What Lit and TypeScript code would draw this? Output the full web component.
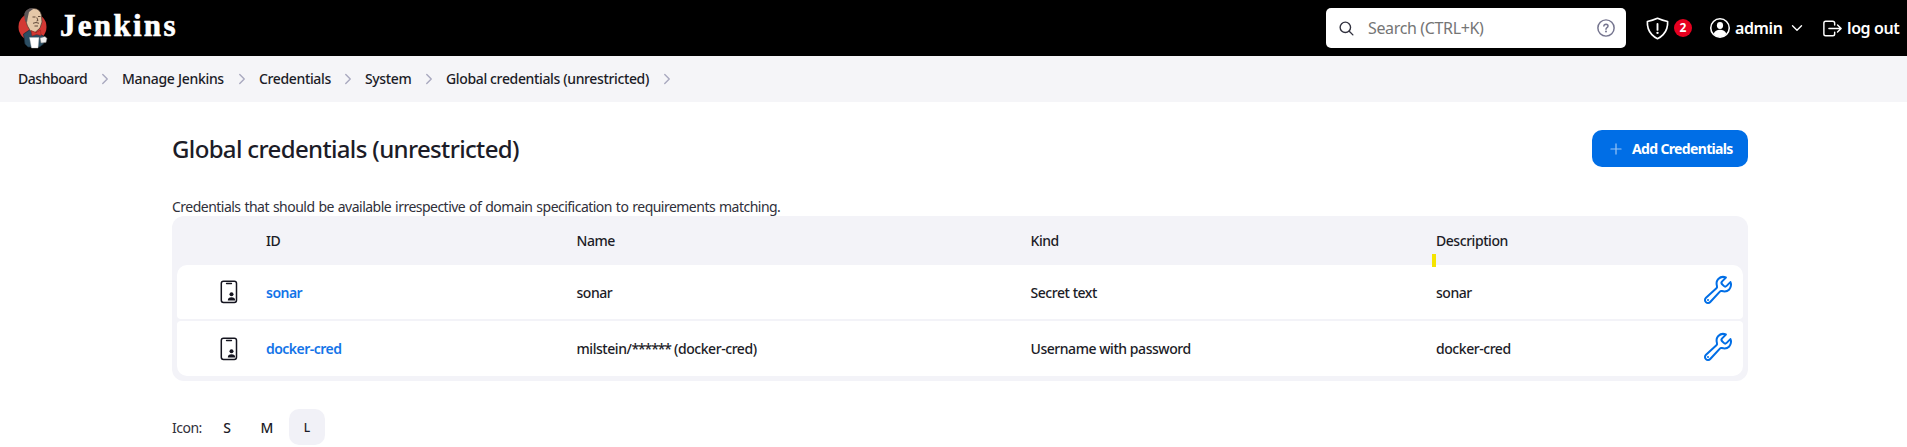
import { LitElement, html, css, svg } from "lit";
import { customElement } from "lit/decorators.js";

interface Credential {
  id: string;
  name: unknown;
  kind: string;
  description: string;
}

const crumbs = [
  { label: "Dashboard", cls: "c1" },
  { label: "Manage Jenkins", cls: "c2" },
  { label: "Credentials", cls: "c3" },
  { label: "System", cls: "c4" },
  { label: "Global credentials (unrestricted)", cls: "c5" },
];

const credentials: Credential[] = [
  { id: "sonar", name: "sonar", kind: "Secret text", description: "sonar" },
  {
    id: "docker-cred",
    name: html`milstein/<span class="mask">******</span> (docker-cred)`,
    kind: "Username with password",
    description: "docker-cred",
  },
];

const butler = html`<svg class="butler" viewBox="0 0 30 42" width="30" height="42">
  <ellipse cx="14.500" cy="20" rx="14" ry="14" fill="#d33833" />
  <path d="M5.500 27l6-4 8 3 6 3 0 8-4 3H10l-3-3z" fill="#2c4e63" stroke="#172a38" stroke-width=".7" />
  <path d="M8 4.500Q6 8 7.500 13l2 6 3 5 4.500 1.500L22 21l2-6-.6-7Q22 1.800 16 1.500 10.500 1 8 4.500z" fill="#e5c8a8" stroke="#4a3a31" stroke-width=".7" />
  <path d="M16 1.300C11 .5 8 2.500 6.300 6.500L7 13.500l2 2 .6-4L11 5z" fill="#5c5557" />
  <path d="M14.500 10h3M20 9.500h2.500M18.800 10.500l1.200 3-1.500.5M15 16.300q3-1.600 6 0M16.500 19h3.500" fill="none" stroke="#513b2e" stroke-width=".9" />
  <path d="M13 23.500l5 2 4.500-2.500.5 5.500-4.500-1-4.500 1.500z" fill="#d33833" stroke="#8d201c" stroke-width=".5" />
  <path d="M11.500 30.500h9.500l-1 10.500h-6.500z" fill="#fff" stroke="#bbb" stroke-width=".4" />
  <path d="M22 31l5-1.500 2 2-1 4-5 .5z" fill="#eee" stroke="#777" stroke-width=".5" />
</svg>`;

const line = (body: unknown, cls: string, size: number) => html`<svg
  class=${cls}
  viewBox="0 0 512 512"
  width=${size}
  height=${size}
  fill="none"
  stroke="currentColor"
  stroke-linecap="round"
  stroke-linejoin="round"
  stroke-width="32"
>
  ${body}
</svg>`;

const chevronRight = svg`<path d="M184 112l144 144-144 144" stroke-width="44" />`;
const chevronDown = svg`<path d="M112 184l144 144 144-144" stroke-width="44" />`;
const magnifier = svg`<path d="M221.090 64a157.090 157.090 0 10157.090 157.090A157.100 157.100 0 00221.090 64z" stroke-width="42" /><path d="M338.290 338.290L448 448" stroke-width="42" />`;
const question = svg`<circle cx="256" cy="256" r="208" stroke-width="38" /><path d="M202 205q2-47 55-47 51 2 51 46 0 24-27 42-25 17-25 43" stroke-width="38" /><circle cx="256" cy="348" r="25" fill="currentColor" stroke="none" />`;
const shield = svg`<path d="M463.100 112.370C373.680 96.330 336.710 84.450 256 48c-80.710 36.450-117.680 48.330-207.100 64.370C32.700 369.130 240.580 457.790 256 464c15.420-6.210 223.300-94.870 207.100-351.630z" stroke-width="34" /><path d="M256 160v125" stroke-width="38" /><circle cx="256" cy="345" r="24" fill="currentColor" stroke="none" />`;
const person = svg`<circle cx="256" cy="256" r="215" stroke-width="36" /><ellipse cx="256" cy="198" rx="72" ry="79" fill="currentColor" stroke="none" /><path d="M106 390c25-62 81-94 150-94s125 32 150 94c-35 47-88 76-150 76s-115-29-150-76z" fill="currentColor" stroke="none" />`;
const exit = svg`<path d="M304 336v40a40 40 0 01-40 40H104a40 40 0 01-40-40V136a40 40 0 0140-40h152c22.090 0 48 17.910 48 40v40M368 336l80-80-80-80M176 256h256" />`;
const plus = svg`<path d="M256 112v288M400 256H112" stroke-width="34" />`;
const wrench = svg`<path d="M393.870 190a32.100 32.100 0 01-45.250 0l-26.570-26.570a32.090 32.090 0 010-45.260L382.190 58a1 1 0 00-.3-1.640c-38.820-16.640-89.150-8.160-121.110 23.570-30.580 30.350-32.320 76-21.120 115.840a31.930 31.930 0 01-9.060 32.080L64 380a48.170 48.170 0 1068 68l153.860-167a31.930 31.930 0 0131.600-9.130c39.540 10.590 84.540 8.600 114.720-21.190 32.490-32 39.500-88.560 23.750-120.930a1 1 0 00-1.600-.26z" stroke-width="32" /><circle cx="96" cy="416" r="16" fill="currentColor" stroke="none" />`;

const badge = html`<svg class="card" viewBox="0 0 18 24" width="18" height="24">
  <rect x="1.300" y="1.300" width="15.200" height="21.200" rx="2.200" fill="none" stroke="#14141f" stroke-width="1.500" />
  <path d="M6.500 3.500h5" stroke="#14141f" stroke-width="1.300" stroke-linecap="round" />
  <circle cx="11.500" cy="14.300" r="2" fill="#14141f" />
  <path d="M7.800 20.500c0-2.300 1.500-3.200 3.700-3.200s3.700.9 3.700 3.200z" fill="#14141f" />
</svg>`;

@customElement("app-root")
export class AppRoot extends LitElement {
  static styles = css`
    :host {
      display: block;
      height: 447px;
      overflow: hidden;
      background: #fff;
      color: #1c1c27;
      font: 500 14px/20px "Noto Sans", "Open Sans", sans-serif;
      white-space: nowrap;
    }
    * { box-sizing: border-box; }
    svg { display: block; flex: none; }
    header {
      display: flex;
      align-items: center;
      height: 56px;
      background: #000;
      color: #fff;
      padding: 0 6px 0 19px;
    }
    .butler { margin-left: -1px; }
    .brand {
      font: 700 31px/40px "Liberation Serif", serif;
      letter-spacing: 2.3px;
      -webkit-text-stroke: 0.6px #fff;
      margin: -4px 0 0 12px;
      flex: 1;
    }
    .search {
      width: 300px;
      height: 40px;
      border-radius: 5px;
      background: #fff;
      display: flex;
      align-items: center;
      padding: 0 10px 0 12px;
      color: #32323f;
    }
    .placeholder {
      flex: 1;
      margin-left: 13px;
      font-weight: 400;
      font-size: 16px;
      letter-spacing: -0.35px;
      color: #757575;
    }
    .help { color: #75758f; }
    .shield { margin-left: 19px; }
    .count {
      width: 18px;
      height: 18px;
      border-radius: 9px;
      background: #e6001f;
      font: 700 12px/18px "Noto Sans", sans-serif;
      text-align: center;
      margin: 0 17px 0 4px;
    }
    .nav { font-size: 16px; font-weight: 600; letter-spacing: -0.4px; }
    .admin { width: 46px; margin: 0 8px 0 4px; }
    .exit { margin: 0 3px 0 16px; }
    .logout { width: 54px; }
    nav {
      height: 46px;
      background: #f5f5f8;
      display: flex;
      align-items: center;
      padding-left: 18px;
    }
    .crumb { display: block; letter-spacing: -0.36px; }
    .c1 { width: 68px; letter-spacing: -0.45px; }
    .c2 { width: 101px; letter-spacing: -0.3px; }
    .c3 { width: 70px; }
    .c4 { width: 45px; }
    .c5 { width: 202px; }
    .sep { margin: 0 9px 0 11px; color: #a9a9bf; }
    main { padding: 28px 159px 0 172px; }
    .top { display: flex; justify-content: space-between; height: 37px; }
    h1 {
      font-size: 24px;
      line-height: 38px;
      font-weight: 500;
      letter-spacing: -0.65px;
      margin: 0;
    }
    .add {
      display: flex;
      align-items: center;
      width: 156px;
      height: 37px;
      border-radius: 10px;
      background: #006ee6;
      color: #fff;
      padding-left: 15px;
      font-weight: 700;
      letter-spacing: -0.65px;
    }
    .plus { margin-right: 7px; opacity: 0.6; }
    .intro {
      margin-top: 30px;
      font-weight: 400;
      height: 19px;
      letter-spacing: -0.52px;
      word-spacing: 0.8px;
      color: #30303a;
    }
    .table {
      height: 165px;
      background: #f3f3f8;
      border-radius: 12px;
      padding: 0 5px 5px;
      display: grid;
      grid-template-rows: 49px 54px 57px;
    }
    .row {
      display: grid;
      grid-template-columns: 43px 46px 310.500px 454px 405.500px 1fr;
      align-items: center;
      letter-spacing: -0.45px;
    }
    .body { background: #fff; border-radius: 10px 10px 4px 4px; }
    .body + .body { margin-top: 2px; border-radius: 4px 4px 10px 10px; }
    .body > span { padding-top: 1px; }
    .link { color: #1374e8; font-weight: 600; letter-spacing: -0.52px; }
    .mask { letter-spacing: -1.1px; }
    .end {
      display: flex;
      align-items: center;
      justify-content: space-between;
      padding-right: 9px;
    }
    .tool { color: #006ee6; margin-top: -5px; }
    .last { position: relative; }
    .mark {
      position: absolute;
      left: -4px;
      top: 23px;
      width: 4px;
      height: 13px;
      background: #f5e400;
      z-index: 1;
    }
    .sizes { display: flex; align-items: center; margin-top: 28px; height: 36px; }
    .label { font-weight: 400; width: 37px; letter-spacing: -0.5px; padding-top: 2px; color: #30303a; }
    .size { width: 36px; height: 36px; line-height: 38px; margin-right: 4px; text-align: center; }
    .on { background: #f1f1f7; border-radius: 10px; font-size: 12px; }
  `;

  render() {
    return html`
      <header>
        ${butler}
        <div class="brand">Jenkins</div>
        <div class="search">
          ${line(magnifier, "glass", 17)}
          <span class="placeholder">Search (CTRL+K)</span>
          ${line(question, "help", 20)}
        </div>
        ${line(shield, "shield", 25)}
        <span class="count">2</span>
        ${line(person, "person", 22)}
        <span class="nav admin">admin</span>
        ${line(chevronDown, "down", 16)}
        ${line(exit, "exit", 23)}
        <span class="nav logout">log out</span>
      </header>
      <nav>
        ${crumbs.map((c) => html`<span class="crumb ${c.cls}">${c.label}</span>${line(chevronRight, "sep", 16)}`)}
      </nav>
      <main>
        <div class="top">
          <h1>Global credentials (unrestricted)</h1>
          <div class="add">${line(plus, "plus", 18)}<span>Add Credentials</span></div>
        </div>
        <div class="intro">Credentials that should be available irrespective of domain specification to requirements matching.</div>
        <div class="table">
          <div class="row">
            <span></span><span></span><span>ID</span><span>Name</span><span>Kind</span>
            <span class="last">Description<i class="mark"></i></span>
          </div>
          ${credentials.map((c) => this.row(c))}
        </div>
        <div class="sizes">
          <span class="label">Icon:</span>
          <span class="size">S</span>
          <span class="size">M</span>
          <span class="size on">L</span>
        </div>
      </main>
    `;
  }

  private row(c: Credential) {
    return html`<div class="row body">
      <span></span>${badge}
      <span class="link">${c.id}</span>
      <span>${c.name}</span>
      <span>${c.kind}</span>
      <span class="end"><span>${c.description}</span>${line(wrench, "tool", 32)}</span>
    </div>`;
  }
}
